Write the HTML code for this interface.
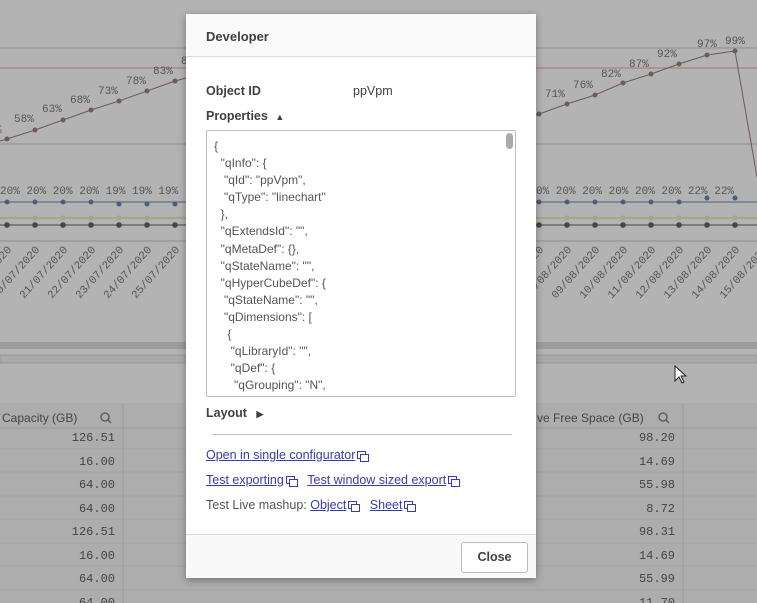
<!DOCTYPE html>
<html><head><meta charset="utf-8"><style>
*{margin:0;padding:0;box-sizing:border-box}
body{width:757px;height:603px;overflow:hidden;background:#b3b3b3;font-family:"Liberation Sans",sans-serif;position:relative}
.bg{position:absolute;left:0;top:0}
.dlg{position:absolute;left:186px;top:14px;width:350px;height:564px;background:#fff;box-shadow:0 2px 8px rgba(0,0,0,.35);border-radius:2px}
.hd{height:43px;border-bottom:1px solid #d9d9d9;background:#fafafa;padding:15px 20px;font-weight:bold;font-size:13px;color:#404040}
.b{position:absolute;font-size:12.5px;color:#404040}
.lb{font-weight:bold}
.ta{position:absolute;left:20px;top:116px;width:310px;height:267px;border:1px solid #bdbdbd;border-radius:2px;overflow:hidden;padding:7px 0 0 7px;font-size:12px;color:#555;line-height:17.1px;white-space:pre}
.sb{position:absolute;right:2px;top:2px;width:7px;height:16px;background:#aaa;border-radius:4px}
a{color:#3a3ab0;text-decoration:underline;font-size:12.5px}
.ic{display:inline-block;width:11px;height:9px;position:relative;margin-left:2px;vertical-align:-1px}
.ic:before{content:"";position:absolute;left:0;top:0;width:7px;height:6px;border:1px solid #3a3ab0}
.ic:after{content:"";position:absolute;left:3px;top:3px;width:7px;height:6px;border:1px solid #3a3ab0;background:#fff}
.ft{position:absolute;left:0;bottom:0;width:100%;height:44px;border-top:1px solid #d9d9d9;background:#f9f9f9}
.btn{position:absolute;right:8px;top:7px;width:67px;height:31px;border:1px solid #bcbcbc;border-radius:3px;background:#fff;font-weight:bold;font-size:12.5px;color:#404040;text-align:center;line-height:29px}
</style></head><body>
<svg class="bg" width="757" height="603" font-family="Liberation Mono,monospace" font-size="11" fill="#555">
<line x1="0" y1="48" x2="757" y2="48" stroke="#8e8e8e"/>
<line x1="0" y1="68" x2="757" y2="68" stroke="#b07070"/>
<line x1="0" y1="144" x2="757" y2="144" stroke="#8e8e8e"/>
<line x1="0" y1="241" x2="757" y2="241" stroke="#8e8e8e"/>
<polyline fill="none" stroke="#6e5a5a" points="0,141 7,139 35,130 63,120 91,110 119,101 147,91 175,81 186,78"/>
<polyline fill="none" stroke="#6e5a5a" points="536,115 539,114 567,104 595,95 623,83 651,74 679,64 707,55 735,51 757,177"/>
<g fill="#6e5a5a"><circle cx="7" cy="139" r="2.5"/><circle cx="35" cy="130" r="2.5"/><circle cx="63" cy="120" r="2.5"/><circle cx="91" cy="110" r="2.5"/><circle cx="119" cy="101" r="2.5"/><circle cx="147" cy="91" r="2.5"/><circle cx="175" cy="81" r="2.5"/>
<circle cx="539" cy="114" r="2.5"/><circle cx="567" cy="104" r="2.5"/><circle cx="595" cy="95" r="2.5"/><circle cx="623" cy="83" r="2.5"/><circle cx="651" cy="74" r="2.5"/><circle cx="679" cy="64" r="2.5"/><circle cx="707" cy="55" r="2.5"/><circle cx="735" cy="51" r="2.5"/></g>
<text x="-5" y="133">%</text><text x="14" y="122">58%</text><text x="42" y="112">63%</text><text x="70" y="103">68%</text><text x="98" y="94">73%</text><text x="126" y="84">78%</text><text x="153" y="74">83%</text><text x="181" y="64">8</text>
<text x="545" y="97">71%</text><text x="573" y="88">76%</text><text x="601" y="77">82%</text><text x="629" y="67">87%</text><text x="657" y="57">92%</text><text x="697" y="47">97%</text><text x="725" y="44">99%</text>
<line x1="0" y1="202" x2="757" y2="202" stroke="#4a5e7a"/>
<line x1="0" y1="218" x2="757" y2="218" stroke="#a8a488" stroke-width="2"/>
<line x1="0" y1="225" x2="757" y2="225" stroke="#3c4a42"/>
<g fill="#4a5e7a"><circle cx="7" cy="202" r="2.5"/><circle cx="35" cy="202" r="2.5"/><circle cx="63" cy="202" r="2.5"/><circle cx="91" cy="202" r="2.5"/><circle cx="119" cy="204" r="2.5"/><circle cx="147" cy="204" r="2.5"/><circle cx="175" cy="204" r="2.5"/>
<circle cx="539" cy="202" r="2.5"/><circle cx="567" cy="202" r="2.5"/><circle cx="595" cy="202" r="2.5"/><circle cx="623" cy="202" r="2.5"/><circle cx="651" cy="202" r="2.5"/><circle cx="679" cy="202" r="2.5"/><circle cx="707" cy="198" r="2.5"/><circle cx="735" cy="198" r="2.5"/></g>
<text x="0" y="194">20% 20% 20% 20% 19% 19% 19%</text>
<text x="536" y="194">0% 20% 20% 20% 20% 20% 22% 22%</text>
<g fill="#3c4a42"><circle cx="7" cy="225" r="2.8"/><circle cx="35" cy="225" r="2.8"/><circle cx="63" cy="225" r="2.8"/><circle cx="91" cy="225" r="2.8"/><circle cx="119" cy="225" r="2.8"/><circle cx="147" cy="225" r="2.8"/><circle cx="175" cy="225" r="2.8"/>
<circle cx="539" cy="225" r="2.8"/><circle cx="567" cy="225" r="2.8"/><circle cx="595" cy="225" r="2.8"/><circle cx="623" cy="225" r="2.8"/><circle cx="651" cy="225" r="2.8"/><circle cx="679" cy="225" r="2.8"/><circle cx="707" cy="225" r="2.8"/><circle cx="735" cy="225" r="2.8"/></g>
<g fill="#a8a488"><circle cx="35" cy="218" r="2.5"/><circle cx="63" cy="218" r="2.5"/><circle cx="91" cy="218" r="2.5"/><circle cx="119" cy="218" r="2.5"/><circle cx="147" cy="218" r="2.5"/><circle cx="567" cy="218" r="2.5"/><circle cx="595" cy="218" r="2.5"/><circle cx="623" cy="218" r="2.5"/><circle cx="651" cy="218" r="2.5"/><circle cx="679" cy="218" r="2.5"/><circle cx="707" cy="218" r="2.5"/><circle cx="735" cy="218" r="2.5"/></g>
<g font-size="11" text-anchor="end">
<text transform="translate(12,250) rotate(-48)">19/07/2020</text><text transform="translate(40,250) rotate(-48)">20/07/2020</text><text transform="translate(68,250) rotate(-48)">21/07/2020</text><text transform="translate(96,250) rotate(-48)">22/07/2020</text><text transform="translate(124,250) rotate(-48)">23/07/2020</text><text transform="translate(152,250) rotate(-48)">24/07/2020</text><text transform="translate(180,250) rotate(-48)">25/07/2020</text>
<text transform="translate(544,250) rotate(-48)">07/08/2020</text><text transform="translate(572,250) rotate(-48)">08/08/2020</text><text transform="translate(600,250) rotate(-48)">09/08/2020</text><text transform="translate(628,250) rotate(-48)">10/08/2020</text><text transform="translate(656,250) rotate(-48)">11/08/2020</text><text transform="translate(684,250) rotate(-48)">12/08/2020</text><text transform="translate(712,250) rotate(-48)">13/08/2020</text><text transform="translate(740,250) rotate(-48)">14/08/2020</text><text transform="translate(768,250) rotate(-48)">15/08/2020</text>
</g>
<rect x="0" y="342" width="757" height="7" fill="#9c9c9c"/>
<rect x="0" y="355" width="757" height="8" fill="#a9a9a9" stroke="#999"/>
<rect x="0" y="403" width="757" height="200" fill="#adadad"/>
<line x1="123" y1="403" x2="123" y2="603" stroke="#9c9c9c"/>
<line x1="683" y1="403" x2="683" y2="603" stroke="#9c9c9c"/>
<line x1="0" y1="428" x2="757" y2="428" stroke="#9c9c9c"/>
<g stroke="#a2a2a2"><line x1="0" y1="449" x2="757" y2="449"/><line x1="0" y1="472" x2="757" y2="472"/><line x1="0" y1="496" x2="757" y2="496"/><line x1="0" y1="519" x2="757" y2="519"/><line x1="0" y1="543" x2="757" y2="543"/><line x1="0" y1="566" x2="757" y2="566"/><line x1="0" y1="590" x2="757" y2="590"/></g>
<g font-family="Liberation Sans,sans-serif" font-size="12" fill="#444"><text x="2" y="422">Capacity (GB)</text><text x="537" y="422">ve Free Space (GB)</text></g>
<g fill="none" stroke="#555" stroke-width="1.3"><circle cx="105" cy="417" r="4"/><line x1="108" y1="420" x2="111" y2="423"/><circle cx="663" cy="417" r="4"/><line x1="666" y1="420" x2="669" y2="423"/></g>
<g font-size="12" fill="#444" text-anchor="end"><text x="115" y="441">126.51</text><text x="115" y="465">16.00</text><text x="115" y="488">64.00</text><text x="115" y="512">64.00</text><text x="115" y="535">126.51</text><text x="115" y="559">16.00</text><text x="115" y="582">64.00</text><text x="115" y="606">64.00</text>
<text x="675" y="441">98.20</text><text x="675" y="465">14.69</text><text x="675" y="488">55.98</text><text x="675" y="512">8.72</text><text x="675" y="535">98.31</text><text x="675" y="559">14.69</text><text x="675" y="582">55.99</text><text x="675" y="606">11.70</text></g>
<path d="M675,366 L675,381 L679,377 L682,383 L684,382 L681,376 L686,376 Z" fill="#fff" stroke="#222" stroke-width="1"/>
</svg>
<div class="dlg">
<div class="hd">Developer</div>
<div class="b lb" style="left:20px;top:70px">Object ID</div>
<div class="b" style="left:167px;top:70px">ppVpm</div>
<div class="b lb" style="left:20px;top:95px">Properties <span style="font-size:9px;margin-left:4px">&#9650;</span></div>
<div class="ta">{
  "qInfo": {
   "qId": "ppVpm",
   "qType": "linechart"
  },
  "qExtendsId": "",
  "qMetaDef": {},
  "qStateName": "",
  "qHyperCubeDef": {
   "qStateName": "",
   "qDimensions": [
    {
     "qLibraryId": "",
     "qDef": {
      "qGrouping": "N",
       "<div class="sb"></div></div>
<div class="b lb" style="left:20px;top:392px">Layout <span style="font-size:9px;margin-left:6px">&#9654;</span></div>
<div style="position:absolute;left:26px;top:420px;width:300px;border-top:1px solid #bdbdbd"></div>
<div class="b" style="left:20px;top:434px"><a>Open in single configurator</a><span class="ic"></span></div>
<div class="b" style="left:20px;top:459px"><a>Test exporting</a><span class="ic"></span>&nbsp;&nbsp;&nbsp;<a>Test window sized export</a><span class="ic"></span></div>
<div class="b" style="left:20px;top:484px;color:#555">Test Live mashup: <a>Object</a><span class="ic"></span>&nbsp;&nbsp;&nbsp;<a>Sheet</a><span class="ic"></span></div>
<div class="ft"><div class="btn">Close</div></div>
</div>
</body></html>
